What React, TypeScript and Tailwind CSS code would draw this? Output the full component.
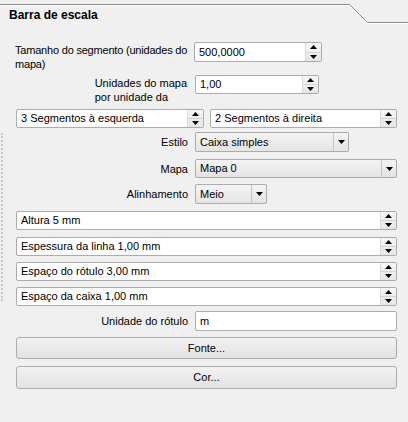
import React from 'react';

const font = "font-['Liberation_Sans',Arial,sans-serif]";

function Up() {
  return (
    <svg width="7" height="4" viewBox="0 0 7 4">
      <path d="M3.5 0 L7 4 L0 4 Z" fill="#000" />
    </svg>
  );
}

function Down() {
  return (
    <svg width="7" height="4" viewBox="0 0 7 4">
      <path d="M0 0 L7 0 L3.5 4 Z" fill="#000" />
    </svg>
  );
}

function SpinBox({ value, className = '' }: { value: string; className?: string }) {
  return (
    <div className={`flex bg-white border border-[#acacac] rounded-[2px] overflow-hidden ${className}`}>
      <div className="flex-1 flex items-center pl-[4px] whitespace-nowrap overflow-hidden">{value}</div>
      <div className="flex flex-col w-[16px] border-l border-[#dcdcdc] bg-gradient-to-b from-[#f6f6f6] to-[#e6e6e6]">
        <div className="flex-1 flex items-center justify-center border-b border-[#d4d4d4]">
          <Up />
        </div>
        <div className="flex-1 flex items-center justify-center">
          <Down />
        </div>
      </div>
    </div>
  );
}

function Combo({ value, className = '' }: { value: string; className?: string }) {
  return (
    <div className={`flex border border-[#acacac] rounded-[2px] bg-gradient-to-b from-[#f4f4f4] to-[#e4e4e4] ${className}`}>
      <div className="flex-1 flex items-center pl-[4px]">{value}</div>
      <div className="w-[15px] flex items-center justify-center border-l border-[#c4c4c4]">
        <Down />
      </div>
    </div>
  );
}

function Label({ children }: { children: React.ReactNode }) {
  return <div className="w-[172px] mr-[7px] text-right leading-[14px] shrink-0">{children}</div>;
}

function Button({ text, className = '' }: { text: string; className?: string }) {
  return (
    <div
      className={`flex items-center justify-center border border-[#acacac] rounded-[3px] bg-gradient-to-b from-[#f2f2f2] to-[#e2e2e2] ${className}`}
    >
      {text}
    </div>
  );
}

export default function App() {
  return (
    <div className={`relative w-[408px] h-[422px] bg-[#f0f0f0] text-black text-[11px] overflow-hidden ${font}`}>
      {/* header frame line */}
      <svg className="absolute left-0 top-0" width="408" height="30">
        <path d="M0 4.5 H349.5 L367.5 22.5 H408" fill="none" stroke="#8a8a8a" strokeWidth="1" />
        <path d="M0 5.5 H349 L367 23.5 H408" fill="none" stroke="#ffffff" strokeWidth="1" />
      </svg>

      {/* splitter dots */}
      <div className="absolute left-[1px] top-[133px] h-[168px] w-[2px] border-l-2 border-dotted border-[#c8c8c8]" />

      <div className="h-[22px] pl-[9px] pt-[8px] font-bold text-[12px] leading-[14px]">Barra de escala</div>

      <div className="flex flex-col pl-[16px] pr-[11px] mt-[20px]">
        <div className="flex">
          <div className="w-[179px] mr-0 leading-[14px] tracking-[-0.2px] shrink-0 -ml-[1px] pt-[1px]">
            Tamanho do segmento (unidades do mapa)
          </div>
          <SpinBox value="500,0000" className="w-[128px] h-[20px]" />
        </div>

        <div className="flex mt-[4px]">
          <Label>
            <div className="inline-block text-left pr-[1px] pt-[1px]">
              Unidades do mapa
              <br />
              por unidade da
            </div>
          </Label>
          <SpinBox value="1,00" className="w-[124px] h-[19px]" />
        </div>

        <div className="flex gap-[6px] mt-[5px]">
          <SpinBox value="3 Segmentos à esquerda" className="w-[188px] h-[19px]" />
          <SpinBox value="2 Segmentos à direita" className="flex-1 h-[19px]" />
        </div>

        <div className="flex items-center mt-[4px]">
          <Label>Estilo</Label>
          <Combo value="Caixa simples" className="w-[154px] h-[20px]" />
        </div>

        <div className="flex items-center mt-[7px]">
          <Label>Mapa</Label>
          <Combo value="Mapa 0" className="flex-1 h-[19px]" />
        </div>

        <div className="flex items-center mt-[6px]">
          <Label>Alinhamento</Label>
          <Combo value="Meio" className="w-[72px] h-[20px]" />
        </div>

        <SpinBox value="Altura 5 mm" className="h-[19px] mt-[7px]" />
        <SpinBox value="Espessura da linha 1,00 mm" className="h-[19px] mt-[7px]" />
        <SpinBox value="Espaço do rótulo 3,00 mm" className="h-[19px] mt-[6px]" />
        <SpinBox value="Espaço da caixa 1,00 mm" className="h-[19px] mt-[6px]" />

        <div className="flex items-center mt-[5px]">
          <Label>Unidade do rótulo</Label>
          <div className="flex-1 h-[20px] bg-white border border-[#acacac] rounded-[2px] flex items-center pl-[4px]">m</div>
        </div>

        <Button text="Fonte..." className="h-[22px] mt-[6px]" />
        <Button text="Cor..." className="h-[23px] mt-[7px]" />
      </div>
    </div>
  );
}
